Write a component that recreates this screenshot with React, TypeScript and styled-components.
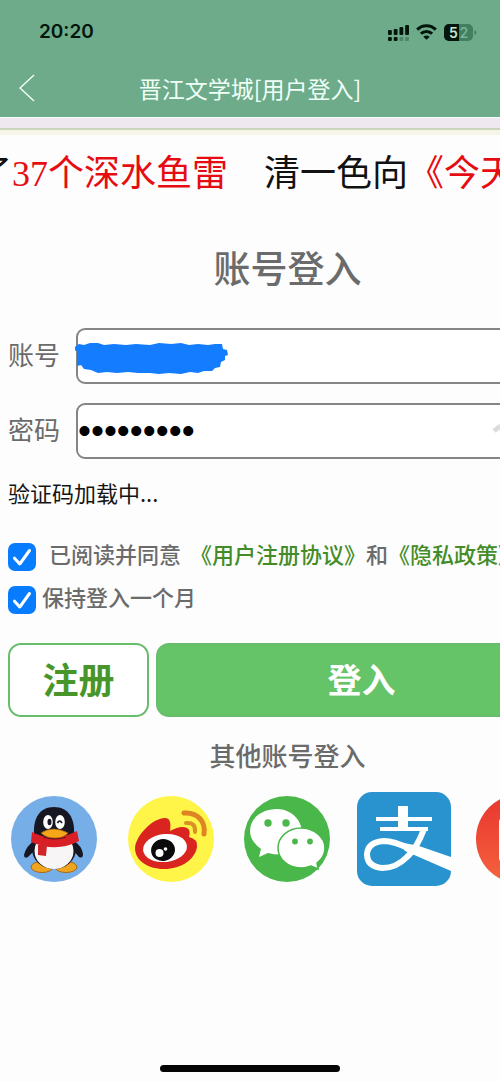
import React from "react";
import styled, { createGlobalStyle } from "styled-components";

const GlobalStyle = createGlobalStyle`
  * { box-sizing: border-box; }
  body {
    margin: 0;
    background: #fdfdfd;
    font-family: "Noto Sans CJK SC", sans-serif;
    color: #6b6b6b;
  }
`;

const Screen = styled.div`
  min-height: 100vh;
  display: flex;
  flex-direction: column;
  overflow: hidden;
`;

const TopBar = styled.header`
  background: #6dab8b;
`;

const StatusBar = styled.div`
  display: flex;
  align-items: center;
  justify-content: space-between;
  height: 64px;
  padding: 0 23px 0 39px;
`;

const Clock = styled.time`
  font: 600 19px/24px Inter, sans-serif;
  color: #04150c;
`;

const StatusIcons = styled.div`
  display: flex;
  align-items: center;
  gap: 7px;
`;

const NavBar = styled.nav`
  display: grid;
  grid-template-columns: 54px 1fr 54px;
  align-items: center;
  height: 53px;
  padding-bottom: 6px;
`;

const BackButton = styled.button`
  display: flex;
  justify-content: center;
  padding: 0;
  border: 0;
  background: none;
`;

const NavTitle = styled.h1`
  margin: 0;
  text-align: center;
  font-size: 23px;
  line-height: 32px;
  font-weight: 400;
  color: #effff7;
`;

const Divider = styled.div`
  height: 18px;
  border-top: 1px solid #f7fbf8;
  background: linear-gradient(#f0e8f0 10px, #ccd3bd 10px, #ccd3bd 12px, #f5f5e8 12px);
`;

const Marquee = styled.p`
  margin: 0;
  padding: 13px 0 12px;
  white-space: pre;
  text-indent: -24px;
  font-family: "Liberation Serif", "Noto Sans CJK SC", serif;
  font-size: 36px;
  line-height: 52px;
  color: #111;
`;

const Hot = styled.span`
  color: #e60c12;
`;

const Page = styled.main`
  flex: 1;
  width: 115%;
  padding: 0 8px;
`;

const PageTitle = styled.h2`
  margin: 27px 0 33px;
  text-align: center;
  font-size: 37px;
  line-height: 56px;
  font-weight: 500;
`;

const Field = styled.div`
  display: grid;
  grid-template-columns: 68px 1fr;
  align-items: center;
  margin-bottom: 19px;
`;

const FieldLabel = styled.label`
  padding-bottom: 4px;
  font-size: 26px;
  line-height: 38px;
`;

const InputWrap = styled.div`
  position: relative;
`;

const TextInput = styled.input`
  display: block;
  width: 100%;
  height: 56px;
  padding: 0;
  border: 2px solid #858585;
  border-radius: 9px;
  outline: 0;
  background: #fff;
  color: #000;
  font-family: "Liberation Sans", sans-serif;
  font-size: 37px;
`;

const Scribble = styled.svg`
  position: absolute;
  left: -1px;
  top: 14px;
`;

const RevealButton = styled.button`
  position: absolute;
  right: 44px;
  top: 18px;
  padding: 0;
  border: 0;
  background: none;
`;

const Captcha = styled.p`
  margin: 0 0 37px;
  font-size: 22px;
  line-height: 28px;
  color: #151515;
`;

const CheckRow = styled.div<{ $gap: number }>`
  display: flex;
  align-items: flex-start;
  gap: ${(p) => p.$gap}px;
  margin-bottom: 15px;
  font-size: 22px;
  line-height: 20px;
  font-weight: 500;
  white-space: pre;
`;

const CheckBoxShell = styled.span`
  display: grid;
  flex: none;
  & > * { grid-area: 1 / 1; }
  svg { pointer-events: none; }
`;

const CheckInput = styled.input`
  appearance: none;
  width: 28px;
  height: 28px;
  margin: 0;
  border-radius: 7px;
  background: #fff;
  border: 1px solid #999;
  &:checked { background: #087cff; border: 0; }
`;

const AgreeLabel = styled.label`
  margin-right: 4px;
`;

const PolicyLink = styled.a`
  color: #438c28;
  text-decoration: none;
`;

const Actions = styled.div`
  display: grid;
  grid-template-columns: 141px 1fr;
  gap: 7px;
  margin-top: 29px;
`;

const ActionButton = styled.button<{ $primary?: boolean }>`
  height: 74px;
  padding: 0 0 4px;
  border: 2px solid #68bd6c;
  border-radius: 13px;
  background: ${(p) => (p.$primary ? "#65c368" : "#fff")};
  color: ${(p) => (p.$primary ? "#fff" : "#48962a")};
  font-family: inherit;
  font-size: ${(p) => (p.$primary ? 34 : 36)}px;
  font-weight: 700;
`;

const OtherTitle = styled.h3`
  margin: 19px 0 18px;
  text-align: center;
  font-size: 26px;
  line-height: 38px;
  font-weight: 500;
`;

const Providers = styled.div`
  display: grid;
  grid-template-columns: repeat(5, 1fr);
  align-items: center;
  justify-items: center;
  margin: 0 -12px;
`;

const Provider = styled.a`
  display: block;
  svg { display: block; }
`;

const Footer = styled.footer`
  display: flex;
  justify-content: center;
  padding-bottom: 10px;
`;

const HomeIndicator = styled.div`
  width: 36%;
  height: 7px;
  border-radius: 4px;
  background: #050505;
`;

function SignalIcon() {
  return (
    <svg width="21" height="17" viewBox="0 0 22 17" preserveAspectRatio="none" fill="#04150c">
      <rect x="0" y="6" width="4" height="5" rx="1" />
      <rect x="6" y="5" width="4" height="6" rx="1" />
      <rect x="12" y="3" width="4" height="8" rx="1" />
      <rect x="18" y="1" width="4" height="10" rx="1" />
      <rect x="0" y="13" width="4" height="4" rx="1" />
      <rect x="6" y="13" width="4" height="4" rx="1" />
      <g opacity=".25">
        <rect x="12" y="13" width="4" height="4" rx="1" />
        <rect x="18" y="13" width="4" height="4" rx="1" />
      </g>
    </svg>
  );
}

function WifiIcon() {
  return (
    <svg width="21" height="16" viewBox="0 0 21 16" fill="none" stroke="#04150c" strokeWidth="3">
      <path d="M1.200 5.600C6.500.4 14.500.4 19.800 5.600" />
      <path d="M4.900 9.700c3.200-3.100 8-3.100 11.200 0" />
      <path d="M10.500 15.800 7.300 12.700q3.200-2.500 6.400 0z" fill="#04150c" stroke="none" />
    </svg>
  );
}

function BatteryIcon() {
  return (
    <svg width="33" height="17" viewBox="0 0 33 17">
      <rect width="29" height="17" rx="5" fill="#427f61" />
      <path d="M5 0h10v17H5a5 5 0 0 1-5-5V5a5 5 0 0 1 5-5z" fill="#04150c" />
      <path d="M30.500 6v5q2-1 2-2.500T30.500 6z" fill="#427f61" />
      <text x="5" y="13.500" fontFamily="Inter, sans-serif" fontSize="14" fontWeight="600" fill="#c9e5d6">5</text>
      <text x="15.500" y="13.500" fontFamily="Inter, sans-serif" fontSize="14" fontWeight="600" fill="#79b495">2</text>
    </svg>
  );
}

function Check(props: { id: string }) {
  return (
    <CheckBoxShell>
      <CheckInput id={props.id} type="checkbox" defaultChecked />
      <svg width="28" height="28" viewBox="0 0 28 28" fill="none" stroke="#fff" strokeWidth="3" strokeLinecap="round" strokeLinejoin="round">
        <path d="M6.500 15.200 11.800 21 21.500 7.500" />
      </svg>
    </CheckBoxShell>
  );
}

function QqIcon() {
  return (
    <svg width="86" height="86" viewBox="0 0 86 86">
      <circle cx="43" cy="43" r="43" fill="#76afe8" />
      <path d="M24 44Q15 50 13 59q0 4 4 2l8-8zM62 44q9 6 10 14 0 5-4 3l-7-8z" fill="#171724" />
      <ellipse cx="31" cy="71" rx="11" ry="5.500" fill="#efa51f" stroke="#a7671d" />
      <ellipse cx="55" cy="71" rx="11" ry="5.500" fill="#efa51f" stroke="#a7671d" />
      <ellipse cx="43" cy="53" rx="22" ry="20" fill="#171724" />
      <ellipse cx="43" cy="55" rx="19.500" ry="18" fill="#f7f5f5" />
      <path d="M23 38C22 22 29 11 43 11s21 11 20 27q-20 10-40 0z" fill="#171724" />
      <ellipse cx="37" cy="26" rx="4.800" ry="7" fill="#fff" />
      <ellipse cx="49" cy="26" rx="4.800" ry="7" fill="#fff" />
      <ellipse cx="38.500" cy="26" rx="2" ry="3.200" fill="#171724" />
      <path d="M46.500 27q2-4 4.500 0" fill="none" stroke="#171724" strokeWidth="1.700" />
      <path d="M21 36q21 11 45-1l2 10Q45 57 20 46z" fill="#d91e26" />
      <path d="M27 49h9l-1 11-8-1z" fill="#cf2428" />
      <path d="M30 37q12-8 27 0-4 5-13 5t-14-5z" fill="#f3a719" stroke="#a95b14" strokeWidth=".7" />
      <path d="M32 41q12 4 23 0" fill="none" stroke="#4d1914" />
    </svg>
  );
}

function WeiboIcon() {
  return (
    <svg width="86" height="86" viewBox="0 0 86 86">
      <circle cx="43" cy="43" r="43" fill="#fff448" />
      <path d="M7 52C8 39 25 22 37 22q7 0 5 13 11-6 17-3 4 2 2 9 9 2 8 10C67 63 54 73 36 73 19 73 7 64 7 52z" fill="#d92420" />
      <ellipse cx="37" cy="52" rx="22" ry="14" fill="#fff" transform="rotate(-6 37 52)" />
      <ellipse cx="35" cy="54" rx="12" ry="11" fill="#0b0b0b" transform="rotate(-12 35 54)" />
      <circle cx="31.500" cy="57" r="4" fill="#fff" />
      <circle cx="37.500" cy="53" r="1.800" fill="#fff" />
      <path d="M58 27q10-1 9 9" fill="none" stroke="#d99024" strokeWidth="4" strokeLinecap="round" />
      <path d="M56 17c13-1 22 8 20 21" fill="none" stroke="#dd8423" strokeWidth="5" strokeLinecap="round" />
    </svg>
  );
}

function WechatIcon() {
  return (
    <svg width="86" height="86" viewBox="0 0 86 86">
      <circle cx="43" cy="43" r="43" fill="#49b749" />
      <path d="M33 13C18 13 6 22 6 35q0 10 11 18l-2 8 9-4q15 4 26-2C61 49 60 33 54 24 49 17 42 13 33 13z" fill="#fff" />
      <path d="M57 32c13 0 24 9 24 20q0 9-8 15l1 6-7-3q-5 2-10 2c-13 0-23-9-23-20s10-20 23-20z" fill="#fff" stroke="#49b749" strokeWidth="1.500" />
      <g fill="#49b749">
        <circle cx="24" cy="27" r="3.700" />
        <circle cx="42" cy="27" r="3.700" />
        <circle cx="51" cy="45.500" r="2.900" />
        <circle cx="66" cy="45.500" r="2.900" />
      </g>
    </svg>
  );
}

function AlipayIcon() {
  return (
    <svg width="94" height="94" viewBox="0 0 94 94">
      <rect width="94" height="94" rx="15" fill="#2993d0" />
      <path d="M41 14h10v24H41zM19 25h56v4H19zM23 35h48v4H23z" fill="#fff" />
      <path d="M67 37Q60 56 50 65 39 76 26 76 10 75 10 62 11 50 27 49 37 49 53 57" fill="none" stroke="#fff" strokeWidth="6" />
      <path d="M62 54 94 65v14L48 59 42 50z" fill="#fff" />
    </svg>
  );
}

function RedIcon() {
  return (
    <svg width="90" height="90" viewBox="0 0 90 90">
      <defs>
        <linearGradient id="redFill" x1="0" y1="0" x2="0" y2="1">
          <stop offset="0" stopColor="#e8352f" />
          <stop offset="1" stopColor="#f5633e" />
        </linearGradient>
      </defs>
      <circle cx="45" cy="45" r="45" fill="url(#redFill)" />
      <rect x="23" y="24" width="44" height="44" rx="4" fill="#fff" />
    </svg>
  );
}

const providers = [
  { name: "QQ", Icon: QqIcon },
  { name: "微博", Icon: WeiboIcon },
  { name: "微信", Icon: WechatIcon },
  { name: "支付宝", Icon: AlipayIcon },
  { name: "小红书", Icon: RedIcon },
];

export default function App() {
  return (
    <Screen>
      <GlobalStyle />
      <TopBar>
        <StatusBar>
          <Clock>20:20</Clock>
          <StatusIcons>
            <SignalIcon />
            <WifiIcon />
            <BatteryIcon />
          </StatusIcons>
        </StatusBar>
        <NavBar>
          <BackButton aria-label="返回">
            <svg width="16" height="28" viewBox="0 0 16 28" fill="none" stroke="#effff7" strokeWidth="1.500">
              <path d="M15 1 1 14l14 13" />
            </svg>
          </BackButton>
          <NavTitle>晋江文学城[用户登入]</NavTitle>
        </NavBar>
      </TopBar>
      <Divider />
      <Marquee>
        了<Hot>37个深水鱼雷</Hot>{"\u00a0\u00a0\u00a0\u00a0"}清一色向<Hot>《今天</Hot>
      </Marquee>
      <Page>
        <PageTitle>账号登入</PageTitle>
        <Field>
          <FieldLabel htmlFor="account">账号</FieldLabel>
          <InputWrap>
            <TextInput id="account" type="text" />
            <Scribble width="156" height="32" viewBox="0 0 156 32" fill="#147cff">
              <path d="M1 4l3-2 5 1 6-2 8 0 6 2 10-1 12 1 10-1 14 1 9-2 12 1 10-1 8 2 9-1 10 1 7-1 7 0 1 5 4 1 1 5-3 1 0 4-4 2-1 5-5 1-3 3-8 0-6 2-8-1-9 2-12-1-10 1-9-1-12 0-10-1-11 1-10-1-9 1-7-3-7-1-3-4-4 1 0-15-5-1z" />
            </Scribble>
          </InputWrap>
        </Field>
        <Field>
          <FieldLabel htmlFor="password">密码</FieldLabel>
          <InputWrap>
            <TextInput id="password" type="password" defaultValue="123456789" />
            <RevealButton aria-label="显示密码">
              <svg width="32" height="18" viewBox="0 0 32 18" fill="none" stroke="#dcdcdc" strokeWidth="5">
                <path d="M3 10q13-12 26 0" />
                <circle cx="16" cy="11" r="4" />
              </svg>
            </RevealButton>
          </InputWrap>
        </Field>
        <Captcha>验证码加载中...</Captcha>
        <CheckRow $gap={13}>
          <Check id="agree" />
          <span>
            <AgreeLabel htmlFor="agree">已阅读并同意</AgreeLabel> <PolicyLink href="#terms">《用户注册协议》</PolicyLink>和<PolicyLink href="#privacy">《隐私政策》</PolicyLink>
          </span>
        </CheckRow>
        <CheckRow $gap={6}>
          <Check id="keep" />
          <label htmlFor="keep">保持登入一个月</label>
        </CheckRow>
        <Actions>
          <ActionButton type="button">注册</ActionButton>
          <ActionButton type="button" $primary>登入</ActionButton>
        </Actions>
        <OtherTitle>其他账号登入</OtherTitle>
        <Providers>
          {providers.map(({ name, Icon }) => (
            <Provider key={name} href="#login" aria-label={name}>
              <Icon />
            </Provider>
          ))}
        </Providers>
      </Page>
      <Footer>
        <HomeIndicator />
      </Footer>
    </Screen>
  );
}
